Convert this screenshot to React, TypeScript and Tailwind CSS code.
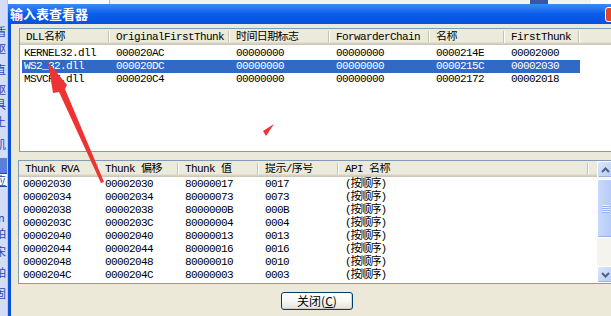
import React from "react";

const MONO =
  "font-['Liberation_Mono','Noto_Sans_CJK_SC',monospace] text-[11px] tracking-[-0.6px] leading-[13px]";

function Divider() {
  return (
    <div className="w-[2px] self-stretch my-[2px] border-l border-l-[#C5C2B2] border-r border-r-white" />
  );
}

function HCell({ w, label }: { w: number; label: string }) {
  return (
    <div className="flex items-center h-full shrink-0" style={{ width: w }}>
      <div className="flex-1 pl-[6px] whitespace-nowrap overflow-hidden text-black">{label}</div>
      <Divider />
    </div>
  );
}

const topCols = [90, 120, 100, 100, 75, 75];
const topHeaders = ["DLL名称", "OriginalFirstThunk", "时间日期标志", "ForwarderChain", "名称", "FirstThunk"];
const topRows = [
  ["KERNEL32.dll", "000020AC", "00000000", "00000000", "0000214E", "00002000"],
  ["WS2_32.dll", "000020DC", "00000000", "00000000", "0000215C", "00002030"],
  ["MSVCRT.dll", "000020C4", "00000000", "00000000", "00002172", "00002018"],
];

const botCols = [80, 80, 80, 80, 250];
const botHeaders = ["Thunk RVA", "Thunk 偏移", "Thunk 值", "提示/序号", "API 名称"];
const botRows = [
  ["00002030", "80000017", "0017"],
  ["00002034", "80000073", "0073"],
  ["00002038", "8000000B", "000B"],
  ["0000203C", "80000004", "0004"],
  ["00002040", "80000013", "0013"],
  ["00002044", "80000016", "0016"],
  ["00002048", "80000010", "0010"],
  ["0000204C", "80000003", "0003"],
];

const headerCls =
  "flex h-[16px] bg-[#EBEADB] shadow-[inset_0_-1px_0_#CBC7B8,inset_0_-2px_0_#D6D2C2,inset_0_-3px_0_#E2DECD]";

function Frag({ t, h }: { t: string; h: number }) {
  return (
    <div className="shrink-0 overflow-hidden flex items-center" style={{ height: h }}>
      <span className="-ml-[5px] whitespace-nowrap leading-[11px]">{t}</span>
    </div>
  );
}

function LeftStrip() {
  const frags: { t: string; h: number }[] = [
    { t: "", h: 25 },
    { t: "盾", h: 13 },
    { t: "驱", h: 20 },
    { t: "直", h: 22 },
    { t: "驱", h: 18 },
    { t: "具", h: 13 },
    { t: "土", h: 20 },
    { t: "肌", h: 27 },
  ];
  const frags2: { t: string; h: number }[] = [
    { t: "", h: 24 },
    { t: "in", h: 13 },
    { t: "鉑", h: 18 },
    { t: "宋", h: 19 },
    { t: "鉑", h: 22 },
    { t: "固", h: 20 },
  ];
  return (
    <div className="w-[8px] h-full shrink-0 flex flex-col bg-[#D3DDF6] border-r border-r-[#B9C8EE] overflow-hidden font-['Noto_Sans_CJK_SC',sans-serif] text-[11px] text-[#2747B5]">
      {frags.map((f, i) => (
        <Frag key={i} t={f.t} h={f.h} />
      ))}
      <div className="h-[15px] shrink-0 bg-[#5B7ED8]" />
      <div className="h-[14px] shrink-0 bg-white border-y border-y-[#2747B5] overflow-hidden flex items-center">
        <span className="-ml-[5px] leading-[11px]">应</span>
      </div>
      {frags2.map((f, i) => (
        <Frag key={i} t={f.t} h={f.h} />
      ))}
    </div>
  );
}

function Chevron({ up }: { up?: boolean }) {
  return (
    <svg width="9" height="6" viewBox="0 0 9 6">
      <path
        d={up ? "M1 5 L4.5 1.5 L8 5" : "M1 1 L4.5 4.5 L8 1"}
        fill="none"
        stroke="#4D6185"
        strokeWidth="2"
      />
    </svg>
  );
}

function ScrollBar() {
  const btn =
    "h-[17px] shrink-0 flex items-center justify-center rounded-[2px] border border-[#FFFFFF] bg-gradient-to-br from-[#DCE6FD] to-[#B5CBF6] shadow-[inset_-1px_-1px_0_#97B2EA]";
  return (
    <div className="w-[17px] shrink-0 flex flex-col bg-[#F4F3EE]">
      <div className={btn}>
        <Chevron up />
      </div>
      <div className="h-[59px] mt-[1px] shrink-0 rounded-[2px] border border-[#FFFFFF] bg-gradient-to-r from-[#C8D8FC] to-[#B4CAF7] shadow-[inset_-1px_-1px_0_#97B2EA] flex flex-col items-center justify-center gap-[1px]">
        {[0, 1, 2, 3].map((i) => (
          <div key={i} className="w-[7px] h-[1px] bg-[#EEF4FE] shadow-[0_1px_0_#8CB0F8]" />
        ))}
      </div>
      <div className="flex-1" />
      <div className={btn}>
        <Chevron />
      </div>
    </div>
  );
}

export default function App() {
  return (
    <div className="relative w-[611px] h-[316px] overflow-hidden flex bg-[#ECE9D8]">
      <LeftStrip />
      <div className="flex-1 flex flex-col min-w-0">
        {/* strip above the window */}
        <div className="h-[4px] shrink-0 flex bg-[#F1F1EE]">
          <div className="w-[102px] bg-[#FAFAFA] border-r border-r-[#B8B8B8]" />
          <div className="w-[420px]" />
          <div className="w-[18px] bg-[#3A55A8]" />
          <div className="flex-1" />
          <div className="w-[20px] bg-white" />
        </div>
        {/* title bar */}
        <div className="h-[20px] shrink-0 flex items-center pl-[2px] bg-gradient-to-b from-[#3B8AF6] via-[#0A5DEA] to-[#0552DD]">
          <div className="font-['Noto_Sans_CJK_SC',sans-serif] font-bold text-[13px] leading-[16px] text-white whitespace-nowrap">
            输入表查看器
          </div>
          <div className="flex-1" />
          <div className="w-[14px] h-[15px] rounded-[3px] border border-white bg-[#E0452A] -mr-[8px]" />
        </div>
        <div className="flex-1 flex min-h-0">
          <div className="w-[3px] shrink-0 bg-[#0A50D8]" />
          {/* dialog body */}
          <div className="flex-1 flex flex-col min-w-0 overflow-hidden bg-[#ECE9D8]">
            {/* top list */}
            <div className={`ml-[8px] mt-[4px] w-[620px] h-[124px] shrink-0 border border-[#7F9DB9] bg-white ${MONO}`}>
              <div className={headerCls}>
                {topHeaders.map((h, i) => (
                  <HCell key={i} w={topCols[i]} label={h} />
                ))}
                <div className="flex-1" />
              </div>
              <div className="pt-[2px]">
                {topRows.map((r, ri) => (
                  <div key={ri} className="flex h-[13px] pl-[2px]">
                    <div className={`flex ${ri === 1 ? "bg-[#316AC5] text-white" : "text-black"}`}>
                      {r.map((c, ci) => (
                        <div
                          key={ci}
                          className={`shrink-0 whitespace-nowrap overflow-hidden ${ci === 0 ? "pl-[2px]" : "pl-[6px]"}`}
                          style={{ width: ci === 0 ? topCols[0] - 2 : topCols[ci] }}
                        >
                          {c}
                        </div>
                      ))}
                    </div>
                  </div>
                ))}
              </div>
            </div>
            {/* bottom list */}
            <div className={`ml-[7px] mt-[8px] w-[620px] h-[124px] shrink-0 border border-[#7F9DB9] bg-white flex ${MONO}`}>
              <div className="w-[578px] shrink-0 flex flex-col">
                <div className={headerCls}>
                  {botHeaders.map((h, i) => (
                    <HCell key={i} w={botCols[i]} label={h} />
                  ))}
                  <div className="flex-1" />
                </div>
                <div className="pt-[1px] text-black">
                  {botRows.map((r, ri) => (
                    <div key={ri} className="flex h-[13px]">
                      <div className="w-[80px] pl-[4px] shrink-0">{r[0]}</div>
                      <div className="w-[80px] pl-[6px] shrink-0">{r[0]}</div>
                      <div className="w-[80px] pl-[6px] shrink-0">{r[1]}</div>
                      <div className="w-[80px] pl-[6px] shrink-0">{r[2]}</div>
                      <div className="w-[250px] pl-[6px] shrink-0 tracking-[-1px]">(按顺序)</div>
                    </div>
                  ))}
                </div>
              </div>
              <ScrollBar />
            </div>
            {/* button */}
            <div className="flex mt-[8px] ml-[270px]">
              <button className="w-[72px] h-[18px] rounded-[3px] border border-[#003C74] bg-gradient-to-b from-white via-[#F7F7F4] to-[#E3E2DA] shadow-[inset_-1px_-1px_0_#D6D0C5] flex items-center justify-center font-['Noto_Sans_CJK_SC',sans-serif] text-[12px] leading-[14px] text-black">
                关闭(<span className="underline">C</span>)
              </button>
            </div>
          </div>
        </div>
      </div>
      {/* annotation arrows */}
      <svg className="absolute inset-0 pointer-events-none" width="611" height="316" viewBox="0 0 611 316">
        <polygon
          points="48,62 67,85 65,89 104,182 101,183 59,92 53,93"
          fill="#EE3333"
        />
        <polygon points="274,124 263,131 266,136" fill="#EE3333" />
      </svg>
    </div>
  );
}
